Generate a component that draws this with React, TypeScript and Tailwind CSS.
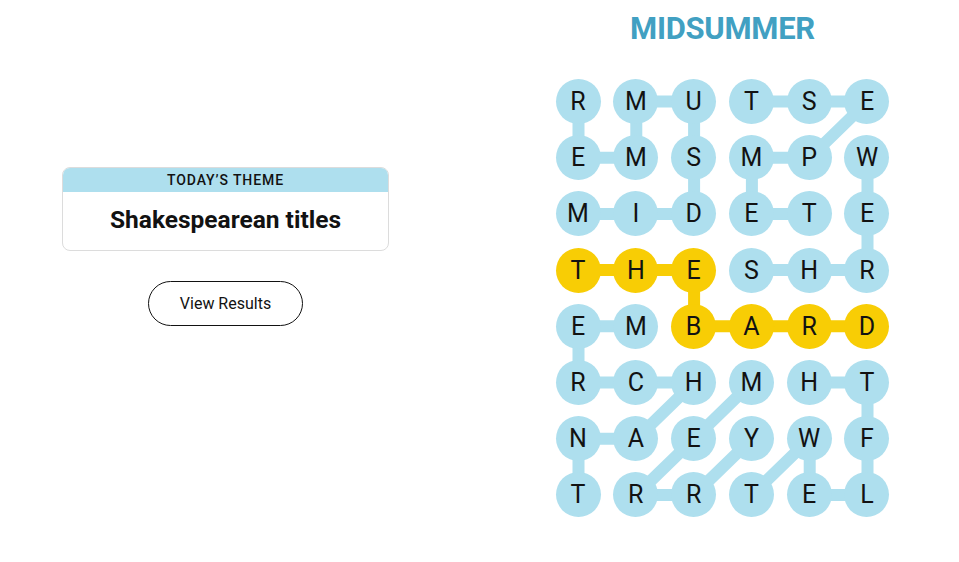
import React from "react";

const LETTERS = [
  "RMUTSE",
  "EMSMPW",
  "MIDETE",
  "THESHR",
  "EMBARD",
  "RCHMHT",
  "NAEYWF",
  "TRRTEL",
];

const YELLOW = new Set(["3,0", "3,1", "3,2", "4,2", "4,3", "4,4", "4,5"]);

type P = [number, number];
const BLUE_PATHS: P[][] = [
  [[2, 0], [2, 1], [2, 2], [1, 2], [0, 2], [0, 1], [1, 1], [1, 0], [0, 0]],
  [[2, 4], [2, 3], [1, 3], [1, 4], [0, 5], [0, 4], [0, 3]],
  [[3, 3], [3, 4], [3, 5], [2, 5], [1, 5]],
  [[4, 1], [4, 0], [5, 0], [5, 1], [5, 2], [6, 1], [6, 0], [7, 0]],
  [[5, 3], [6, 2], [7, 1], [7, 2], [6, 3]],
  [[7, 3], [6, 4], [7, 4], [7, 5], [6, 5], [5, 5], [5, 4]],
];
const YELLOW_PATHS: P[][] = [
  [[3, 0], [3, 1], [3, 2], [4, 2], [4, 3], [4, 4], [4, 5]],
];

const CX = (c: number) => 22.5 + c * 57.8;
const CY = (r: number) => 22.5 + r * 56.2;

function pts(p: P[]) {
  return p.map(([r, c]) => `${CX(c)},${CY(r)}`).join(" ");
}

export default function App() {
  return (
    <div className="flex w-[959px] h-[562px] bg-white" style={{ fontFamily: "Roboto, 'Liberation Sans', sans-serif" }}>
      <div className="w-[451px] flex flex-col items-center pt-[167px]">
        <div className="w-[327px] h-[84px] rounded-[8px] border border-[#dcdcdc] overflow-hidden flex flex-col">
          <div className="h-[24px] bg-[#aedfee] flex items-center justify-center text-[14px] font-medium tracking-[0.9px] text-[#121212] leading-none">
            TODAY’S THEME
          </div>
          <div className="flex-1 flex items-center justify-center text-[24.5px] font-bold text-[#121212] leading-none pb-[2px]">
            Shakespearean titles
          </div>
        </div>
        <button className="mt-[30px] w-[155px] h-[45px] rounded-full border border-[#121212] flex items-center justify-center text-[16px] text-[#121212] leading-none bg-white">
          View Results
        </button>
      </div>
      <div className="ml-[35px] w-[473px] flex flex-col items-center">
        <div className="mt-[13px] text-[31px] font-bold leading-none text-[#41a0c2] tracking-[-0.3px]">MIDSUMMER</div>
        <div className="mt-[35px] relative w-[334px]">
          <svg className="absolute left-0 top-0" width="334" height="440" viewBox="0 0 334 440">
            {BLUE_PATHS.map((p, i) => (
              <polyline key={i} points={pts(p)} fill="none" stroke="#aedfee" strokeWidth="12" strokeLinejoin="round" />
            ))}
            {YELLOW_PATHS.map((p, i) => (
              <polyline key={i} points={pts(p)} fill="none" stroke="#f8cd05" strokeWidth="12" strokeLinejoin="round" />
            ))}
          </svg>
          <div className="relative grid grid-cols-[repeat(6,45px)] gap-x-[12.8px] gap-y-[11.2px]">
            {LETTERS.flatMap((row, r) =>
              row.split("").map((ch, c) => (
                <div
                  key={`${r}-${c}`}
                  className={
                    "w-[45px] h-[45px] rounded-full flex items-center justify-center text-[25px] leading-none text-[#121212] " +
                    (YELLOW.has(`${r},${c}`) ? "bg-[#f8cd05]" : "bg-[#aedfee]")
                  }
                >
                  {ch}
                </div>
              ))
            )}
          </div>
        </div>
      </div>
    </div>
  );
}
